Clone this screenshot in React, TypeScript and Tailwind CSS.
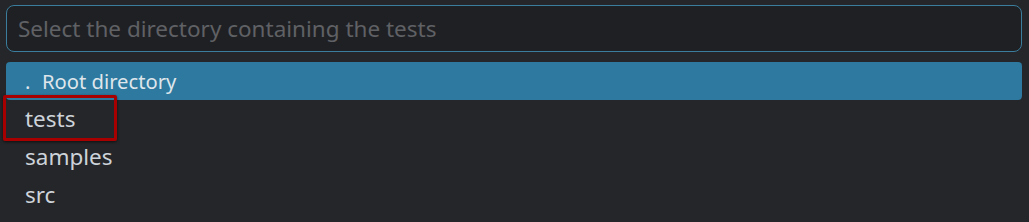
import React from 'react';

const items = ['tests', 'samples', 'src'];

const App: React.FC = () => {
    return (
        <div
            className="w-[1029px] h-[222px] bg-[#252629] pt-[5px] px-[6px] overflow-hidden"
            style={{ fontFamily: '"Noto Sans", sans-serif' }}
        >
            <div className="h-[47px] border border-[#3a7d9c] rounded-[8px] bg-[#1f2023] flex items-center pl-[11px] mr-[1px]">
                <input
                    className="w-full bg-transparent outline-none text-[22.5px] text-[#e0e0e0] placeholder:text-[#5f6165]"
                    placeholder="Select the directory containing the tests"
                />
            </div>
            <div className="mt-[10px] flex flex-col">
                <div className="h-[38px] bg-[#2e79a0] rounded-[4px] flex items-center pl-[19px] text-[20.2px] text-[#dfe6eb] mr-[1px]">
                    <span className="w-[17px]">.</span>
                    <span>Root directory</span>
                </div>
                {items.map((item, i) => (
                    <div key={item} className="relative h-[38px] flex items-center pl-[19px] text-[22.5px] text-[#cdd3d9]">
                        {item}
                        {i === 0 && (
                            <div className="absolute left-[-3px] top-[-5px] w-[114px] h-[46px] border-[3px] border-[#a80000] rounded-[2px] shadow-[0_1px_3px_rgba(0,0,0,0.6)]" />
                        )}
                    </div>
                ))}
            </div>
        </div>
    );
};

export default App;
